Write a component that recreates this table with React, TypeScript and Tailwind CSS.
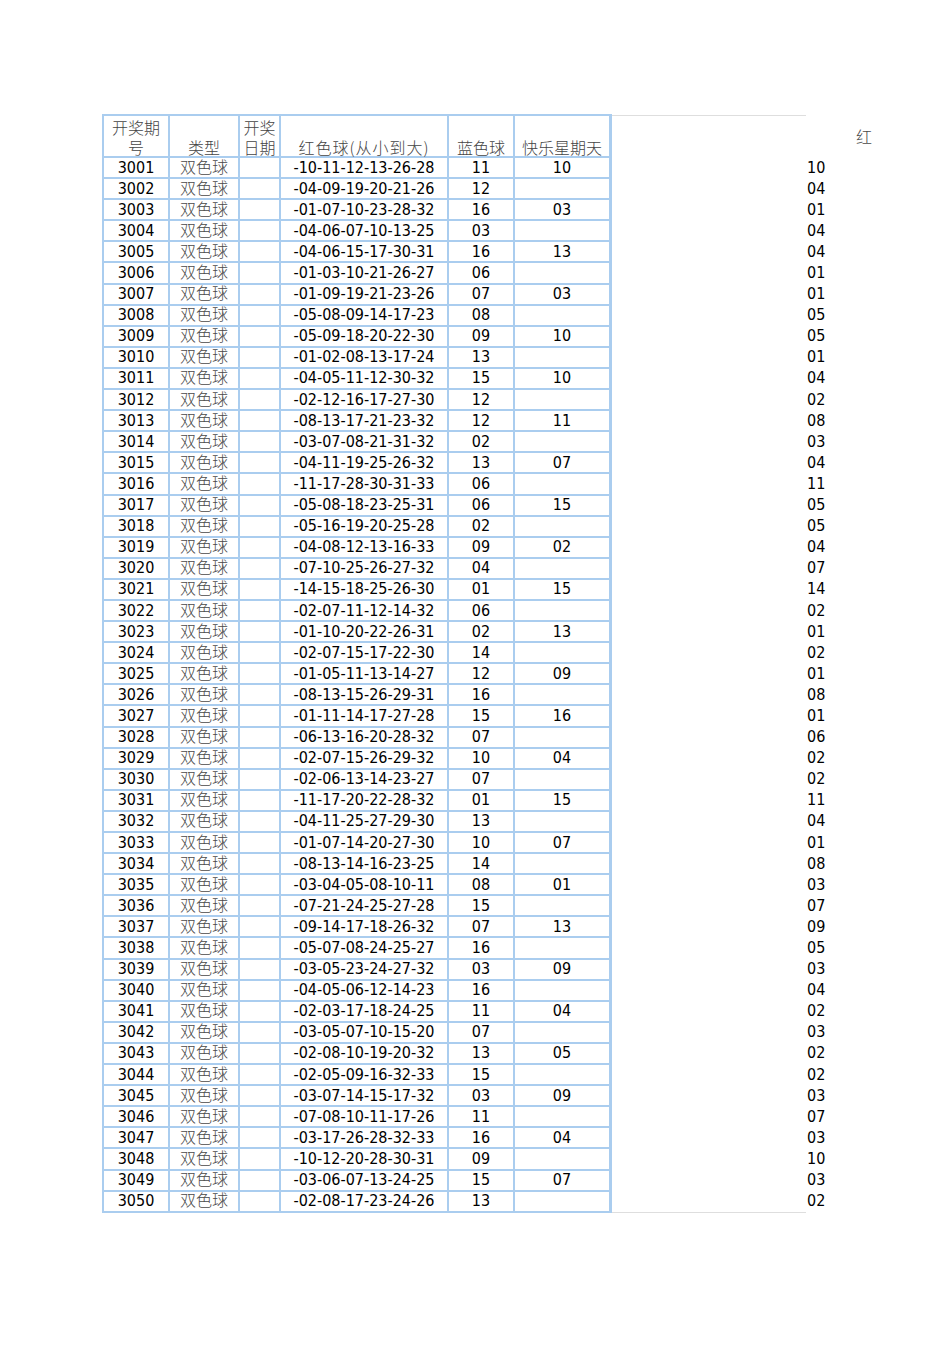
import React from "react";

const data: [string, string, string, string][] = [
  ["3001", "-10-11-12-13-26-28", "11", "10"],
  ["3002", "-04-09-19-20-21-26", "12", ""],
  ["3003", "-01-07-10-23-28-32", "16", "03"],
  ["3004", "-04-06-07-10-13-25", "03", ""],
  ["3005", "-04-06-15-17-30-31", "16", "13"],
  ["3006", "-01-03-10-21-26-27", "06", ""],
  ["3007", "-01-09-19-21-23-26", "07", "03"],
  ["3008", "-05-08-09-14-17-23", "08", ""],
  ["3009", "-05-09-18-20-22-30", "09", "10"],
  ["3010", "-01-02-08-13-17-24", "13", ""],
  ["3011", "-04-05-11-12-30-32", "15", "10"],
  ["3012", "-02-12-16-17-27-30", "12", ""],
  ["3013", "-08-13-17-21-23-32", "12", "11"],
  ["3014", "-03-07-08-21-31-32", "02", ""],
  ["3015", "-04-11-19-25-26-32", "13", "07"],
  ["3016", "-11-17-28-30-31-33", "06", ""],
  ["3017", "-05-08-18-23-25-31", "06", "15"],
  ["3018", "-05-16-19-20-25-28", "02", ""],
  ["3019", "-04-08-12-13-16-33", "09", "02"],
  ["3020", "-07-10-25-26-27-32", "04", ""],
  ["3021", "-14-15-18-25-26-30", "01", "15"],
  ["3022", "-02-07-11-12-14-32", "06", ""],
  ["3023", "-01-10-20-22-26-31", "02", "13"],
  ["3024", "-02-07-15-17-22-30", "14", ""],
  ["3025", "-01-05-11-13-14-27", "12", "09"],
  ["3026", "-08-13-15-26-29-31", "16", ""],
  ["3027", "-01-11-14-17-27-28", "15", "16"],
  ["3028", "-06-13-16-20-28-32", "07", ""],
  ["3029", "-02-07-15-26-29-32", "10", "04"],
  ["3030", "-02-06-13-14-23-27", "07", ""],
  ["3031", "-11-17-20-22-28-32", "01", "15"],
  ["3032", "-04-11-25-27-29-30", "13", ""],
  ["3033", "-01-07-14-20-27-30", "10", "07"],
  ["3034", "-08-13-14-16-23-25", "14", ""],
  ["3035", "-03-04-05-08-10-11", "08", "01"],
  ["3036", "-07-21-24-25-27-28", "15", ""],
  ["3037", "-09-14-17-18-26-32", "07", "13"],
  ["3038", "-05-07-08-24-25-27", "16", ""],
  ["3039", "-03-05-23-24-27-32", "03", "09"],
  ["3040", "-04-05-06-12-14-23", "16", ""],
  ["3041", "-02-03-17-18-24-25", "11", "04"],
  ["3042", "-03-05-07-10-15-20", "07", ""],
  ["3043", "-02-08-10-19-20-32", "13", "05"],
  ["3044", "-02-05-09-16-32-33", "15", ""],
  ["3045", "-03-07-14-15-17-32", "03", "09"],
  ["3046", "-07-08-10-11-17-26", "11", ""],
  ["3047", "-03-17-26-28-32-33", "16", "04"],
  ["3048", "-10-12-20-28-30-31", "09", ""],
  ["3049", "-03-06-07-13-24-25", "15", "07"],
  ["3050", "-02-08-17-23-24-26", "13", ""],
];

const cell =
  "flex items-center justify-center border-r-2 border-b-2 border-[#aacdef] whitespace-nowrap leading-[18px]";
const head =
  "flex flex-col items-center justify-end gap-[4px] pb-[1px] border-r-2 border-b-2 border-[#aacdef] whitespace-nowrap text-center text-[#444] font-light [font-family:'Noto_Sans_CJK_SC',sans-serif]";
const line = "block leading-[16px]";
const cjk =
  "block leading-[16px] text-[#4a4a4a] font-light [font-family:'Noto_Sans_CJK_SC',sans-serif]";

export default function App() {
  return (
    <div className="min-h-[1345px] w-[950px] bg-white pl-[102px] pt-[114px] text-[16px] text-black [font-family:'DejaVu_Sans_Condensed','Liberation_Sans',sans-serif]">
      <div className="flex items-stretch">
        {/* main table */}
        <div className="flex flex-col border-l-2 border-t-2 border-[#aacdef]">
          <div className="flex h-[42px]">
            <div className={`${head} w-[66px]`}>
              <span className={line}>开奖期</span>
              <span className={line}>号</span>
            </div>
            <div className={`${head} w-[70px]`}>
              <span className={line}>类型</span>
            </div>
            <div className={`${head} w-[41px]`}>
              <span className={line}>开奖</span>
              <span className={line}>日期</span>
            </div>
            <div className={`${head} w-[168px]`}>
              <span className={`${line} tracking-[1px]`}>红色球(从小到大)</span>
            </div>
            <div className={`${head} w-[66px]`}>
              <span className={line}>蓝色球</span>
            </div>
            <div className={`${head} w-[97px] border-r-[3px]`}>
              <span className={line}>快乐星期天</span>
            </div>
          </div>
          {data.map(([id, red, blue, happy]) => (
            <div key={id} className="flex h-[21.1px]">
              <div className={`${cell} w-[66px]`}>{id}</div>
              <div className={`${cell} w-[70px]`}>
                <span className={`${cjk} mb-[4px]`}>双色球</span>
              </div>
              <div className={`${cell} w-[41px]`}></div>
              <div className={`${cell} w-[168px]`}>{red}</div>
              <div className={`${cell} w-[66px]`}>{blue}</div>
              <div className={`${cell} w-[97px] border-r-[3px]`}>{happy}</div>
            </div>
          ))}
        </div>

        {/* empty spacer column */}
        <div className="mt-[1px] w-[194px] border-t border-b border-[#dedede]"></div>

        {/* right partial column */}
        <div className="mt-[2px] flex flex-col pl-[1px]">
          <div className="flex h-[42px] items-center pl-[49px] pb-[2px]">
            <span className={cjk}>红</span>
          </div>
          {data.map(([id, red]) => (
            <div key={id} className="flex h-[21.1px] items-center pb-[2px] leading-[18px]">
              {red.slice(1, 3)}
            </div>
          ))}
        </div>
      </div>
    </div>
  );
}
